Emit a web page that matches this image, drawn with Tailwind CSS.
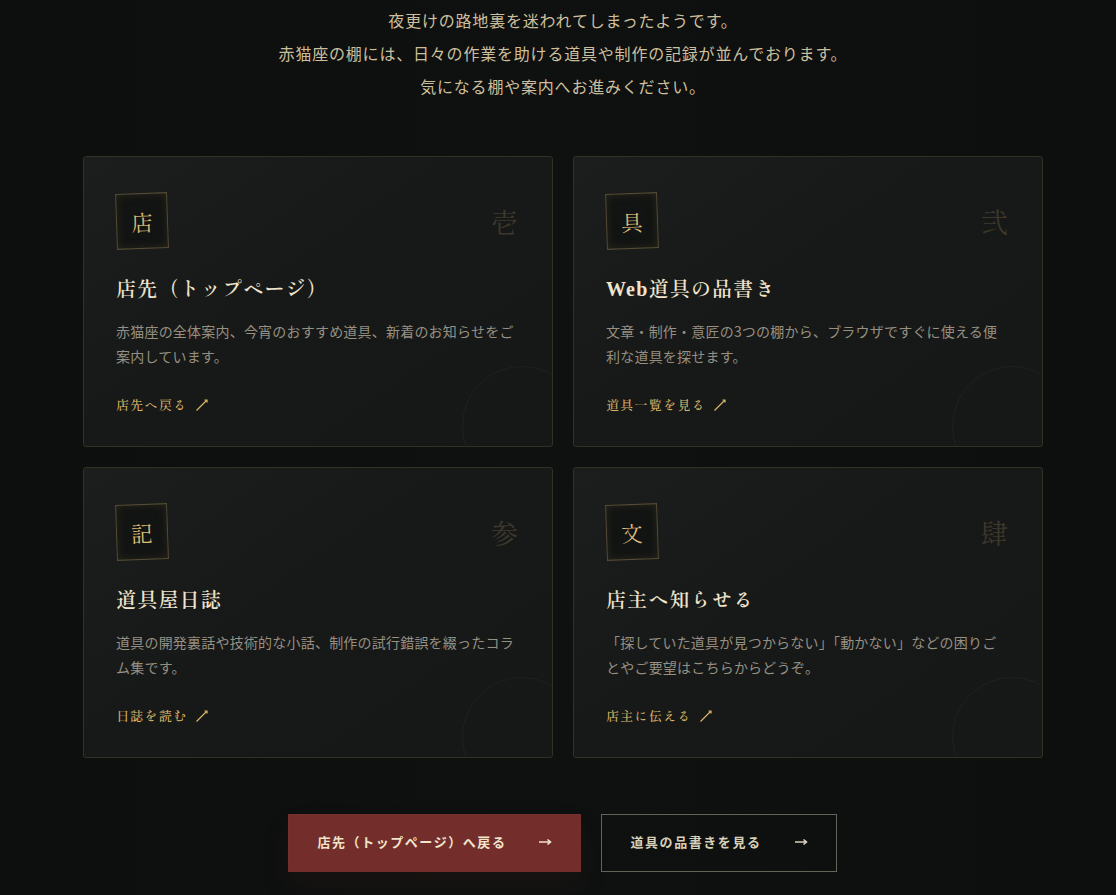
<!DOCTYPE html>
<html lang="ja">
<head>
    <meta charset="UTF-8">
    <meta name="viewport" content="width=device-width, initial-scale=1.0">
    <title>赤猫座 - ご案内</title>
    <script src="https://cdn.jsdelivr.net/npm/@tailwindcss/browser@4"></script>
    <style>
        body {
            font-family: 'Noto Sans CJK JP', sans-serif;
            background-color: #0e1110;
        }
        .mincho {
            font-family: 'Shippori Mincho', 'Noto Serif JP', 'Noto Serif CJK JP', serif;
        }
    </style>
</head>
<body class="min-h-screen bg-linear-to-r from-[#0d0f0f] via-[#0e1110] to-[#0d0f0f]">
    <main class="pt-1 pr-8 pb-6 pl-[42px]">
        <!-- Lead text -->
        <p class="text-center text-base leading-[33px] tracking-wider text-[#cdbf9d]">
            夜更けの路地裏を迷われてしまったようです。<br>
            赤猫座の棚には、日々の作業を助ける道具や制作の記録が並んでおります。<br>
            気になる棚や案内へお進みください。
        </p>

        <!-- Shelf cards -->
        <div class="mx-auto mt-[53px] grid max-w-[960px] grid-cols-2 gap-5">
            <a href="#top" class="relative overflow-hidden rounded-[3px] border border-[#333025] bg-linear-145 from-[#1c1e1d] via-[#171918] via-45% to-[#161817] px-8 pt-9 pb-[29px]">
                <div class="flex items-center justify-between">
                    <span class="mincho flex h-14 w-13 -rotate-2 items-center justify-center border border-[#544c35] bg-[#121413] text-[22px] leading-7 text-[#dfbe78] shadow-[inset_0_0_8px_#2a271c]">店</span>
                    <span class="mincho text-[28px] tracking-wider text-[#3d382b]">壱</span>
                </div>
                <h2 class="mincho mt-6 text-xl leading-[30px] font-semibold tracking-[0.06em] text-[#efe4cd]">店先（トップページ）</h2>
                <p class="mt-4 text-sm leading-[25px] tracking-[0.015em] text-[#968f82]">赤猫座の全体案内、今宵のおすすめ道具、新着のお知らせをご案内しています。</p>
                <span class="mincho mt-6 flex items-center gap-[7px] text-[13px] leading-6 font-medium tracking-widest text-[#d9b569]">店先へ戻る
                    <svg class="size-3.5" viewBox="0 0 14 14" fill="none" stroke="currentColor" stroke-width="1.2"><path d="M1.5 12.5 12 2M9.5 2H12v2.5" /></svg>
                </span>
                <span class="absolute -right-[30px] -bottom-10 size-30 rounded-full border border-[#1f2120]"></span>
            </a>

            <a href="#tools" class="relative overflow-hidden rounded-[3px] border border-[#333025] bg-linear-145 from-[#1c1e1d] via-[#171918] via-45% to-[#161817] px-8 pt-9 pb-[29px]">
                <div class="flex items-center justify-between">
                    <span class="mincho flex h-14 w-13 -rotate-2 items-center justify-center border border-[#544c35] bg-[#121413] text-[22px] leading-7 text-[#dfbe78] shadow-[inset_0_0_8px_#2a271c]">具</span>
                    <span class="mincho text-[28px] tracking-wider text-[#3d382b]">弐</span>
                </div>
                <h2 class="mincho mt-6 text-xl leading-[30px] font-semibold tracking-[0.06em] text-[#efe4cd]"><span class="font-['Liberation_Serif',serif] leading-none">Web</span>道具の品書き</h2>
                <p class="mt-4 text-sm leading-[25px] tracking-[0.015em] text-[#968f82]">文章・制作・意匠の3つの棚から、ブラウザですぐに使える便利な道具を探せます。</p>
                <span class="mincho mt-6 flex items-center gap-[7px] text-[13px] leading-6 font-medium tracking-widest text-[#d9b569]">道具一覧を見る
                    <svg class="size-3.5" viewBox="0 0 14 14" fill="none" stroke="currentColor" stroke-width="1.2"><path d="M1.5 12.5 12 2M9.5 2H12v2.5" /></svg>
                </span>
                <span class="absolute -right-[30px] -bottom-10 size-30 rounded-full border border-[#1f2120]"></span>
            </a>

            <a href="#journal" class="relative overflow-hidden rounded-[3px] border border-[#333025] bg-linear-145 from-[#1c1e1d] via-[#171918] via-45% to-[#161817] px-8 pt-9 pb-[29px]">
                <div class="flex items-center justify-between">
                    <span class="mincho flex h-14 w-13 -rotate-2 items-center justify-center border border-[#544c35] bg-[#121413] text-[22px] leading-7 text-[#dfbe78] shadow-[inset_0_0_8px_#2a271c]">記</span>
                    <span class="mincho text-[28px] tracking-wider text-[#3d382b]">参</span>
                </div>
                <h2 class="mincho mt-6 text-xl leading-[30px] font-semibold tracking-[0.06em] text-[#efe4cd]">道具屋日誌</h2>
                <p class="mt-4 text-sm leading-[25px] tracking-[0.015em] text-[#968f82]">道具の開発裏話や技術的な小話、制作の試行錯誤を綴ったコラム集です。</p>
                <span class="mincho mt-6 flex items-center gap-[7px] text-[13px] leading-6 font-medium tracking-widest text-[#d9b569]">日誌を読む
                    <svg class="size-3.5" viewBox="0 0 14 14" fill="none" stroke="currentColor" stroke-width="1.2"><path d="M1.5 12.5 12 2M9.5 2H12v2.5" /></svg>
                </span>
                <span class="absolute -right-[30px] -bottom-10 size-30 rounded-full border border-[#1f2120]"></span>
            </a>

            <a href="#contact" class="relative overflow-hidden rounded-[3px] border border-[#333025] bg-linear-145 from-[#1c1e1d] via-[#171918] via-45% to-[#161817] px-8 pt-9 pb-[29px]">
                <div class="flex items-center justify-between">
                    <span class="mincho flex h-14 w-13 -rotate-2 items-center justify-center border border-[#544c35] bg-[#121413] text-[22px] leading-7 text-[#dfbe78] shadow-[inset_0_0_8px_#2a271c]">文</span>
                    <span class="mincho text-[28px] tracking-wider text-[#3d382b]">肆</span>
                </div>
                <h2 class="mincho mt-6 text-xl leading-[30px] font-semibold tracking-[0.06em] text-[#efe4cd]">店主へ知らせる</h2>
                <p class="mt-4 text-sm leading-[25px] tracking-[0.015em] text-[#968f82]">「探していた道具が見つからない」「動かない」などの困りごとやご要望はこちらからどうぞ。</p>
                <span class="mincho mt-6 flex items-center gap-[7px] text-[13px] leading-6 font-medium tracking-widest text-[#d9b569]">店主に伝える
                    <svg class="size-3.5" viewBox="0 0 14 14" fill="none" stroke="currentColor" stroke-width="1.2"><path d="M1.5 12.5 12 2M9.5 2H12v2.5" /></svg>
                </span>
                <span class="absolute -right-[30px] -bottom-10 size-30 rounded-full border border-[#1f2120]"></span>
            </a>
        </div>

        <!-- Buttons -->
        <div class="mt-14 flex flex-wrap justify-center gap-5 pr-px">
            <a href="#top" class="flex h-[58px] items-center gap-8 border border-[#75302d] bg-[#732e2b] px-7 pb-0.5 text-[13px] font-bold tracking-[0.12em] text-[#f0e4cc] shadow-[0_14px_30px_#732e2b1a]">店先（トップページ）へ戻る
                <svg class="size-3.5" viewBox="0 0 14 14" fill="none" stroke="currentColor" stroke-width="1.6"><path d="M1 7h12M9.5 4.5 12.5 7 9.5 9.5" /></svg>
            </a>
            <a href="#tools" class="flex h-[58px] items-center gap-8 border border-[#65625a] px-7 pb-0.5 text-[13px] font-bold tracking-[0.12em] text-[#d8cfb8]">道具の品書きを見る
                <svg class="size-3.5" viewBox="0 0 14 14" fill="none" stroke="currentColor" stroke-width="1.6"><path d="M1 7h12M9.5 4.5 12.5 7 9.5 9.5" /></svg>
            </a>
        </div>
    </main>
</body>
</html>
